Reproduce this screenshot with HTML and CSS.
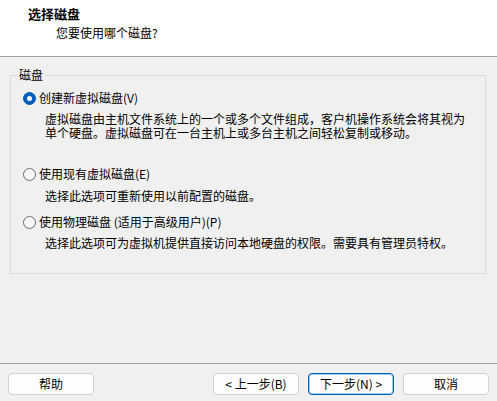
FILE: index.html
```html
<!DOCTYPE html>
<html lang="zh-CN">
<head>
<meta charset="utf-8">
<title>选择磁盘</title>
<link rel="stylesheet" href="styles.css">
</head>
<body>
<div class="dialog">
  <header class="header">
    <div class="title">选择磁盘</div>
    <div class="subtitle">您要使用哪个磁盘?</div>
  </header>
  <main class="main">
    <fieldset class="group">
      <legend class="legend">磁盘</legend>
      <div class="option first">
        <span class="radio checked"></span>
        <span class="label">创建新虚拟磁盘(V)</span>
      </div>
      <div class="desc two">虚拟磁盘由主机文件系统上的一个或多个文件组成，客户机操作系统会将其视为<br>单个硬盘。虚拟磁盘可在一台主机上或多台主机之间轻松复制或移动。</div>
      <div class="option second">
        <span class="radio"></span>
        <span class="label">使用现有虚拟磁盘(E)</span>
      </div>
      <div class="desc">选择此选项可重新使用以前配置的磁盘。</div>
      <div class="option third">
        <span class="radio"></span>
        <span class="label">使用物理磁盘 (适用于高级用户)(P)</span>
      </div>
      <div class="desc last">选择此选项可为虚拟机提供直接访问本地硬盘的权限。需要具有管理员特权。</div>
    </fieldset>
  </main>
  <footer class="footer">
    <button class="btn">帮助</button>
    <div class="spacer"></div>
    <button class="btn">&lt; 上一步(B)</button>
    <button class="btn primary">下一步(N) &gt;</button>
    <button class="btn">取消</button>
  </footer>
</div>
</body>
</html>
```

FILE: styles.css
```css
html, body {
  margin: 0;
  padding: 0;
}
body {
  width: 497px;
  height: 401px;
  overflow: hidden;
  background: #f0f0f0;
  font-family: "Noto Sans CJK SC", "Microsoft YaHei", sans-serif;
  font-size: 12px;
  color: #000;
}
.dialog {
  display: flex;
  flex-direction: column;
  height: 401px;
}
.header {
  height: 56px;
  background: #ffffff;
  border-bottom: 1px solid #a0a0a0;
  box-sizing: content-box;
  padding: 0;
}
.title {
  font-size: 13px;
  font-weight: bold;
  line-height: 14px;
  margin: 7px 0 0 28px;
}
.subtitle {
  line-height: 14px;
  margin: 5px 0 0 56px;
}
.main {
  flex: 1;
}
.group {
  margin: 11px 11px 0 10px;
  padding: 0 0 24px 6px;
  border: 1px solid #dcdcdc;
  min-width: 0;
}
.legend {
  padding: 0 2px;
  line-height: 14px;
}
.option {
  display: flex;
  align-items: center;
  height: 16px;
  line-height: 16px;
  margin-left: 6px;
}
.option.first { margin-top: 8px; }
.option.second { margin-top: 26px; }
.option.third { margin-top: 12px; }
.radio {
  width: 13px;
  height: 13px;
  box-sizing: border-box;
  border: 1px solid #6b6b6b;
  border-radius: 50%;
  background: #f7f7f7;
  margin-right: 3px;
  flex: none;
  display: flex;
  align-items: center;
  justify-content: center;
}
.radio.checked {
  background: #005fb8;
  border-color: #005fb8;
}
.radio.checked::after {
  content: "";
  width: 5px;
  height: 5px;
  border-radius: 50%;
  background: #ffffff;
}
.desc {
  margin: 8px 0 0 28px;
  line-height: 12px;
  white-space: nowrap;
}
.desc.two {
  margin-top: 6px;
  line-height: 14px;
}
.desc.last {
  margin-top: 7px;
}
.footer {
  border-top: 1px solid #a0a0a0;
  height: 38px;
  box-sizing: border-box;
  display: flex;
  align-items: flex-start;
  padding: 9px 8px 0 8px;
  gap: 9px;
}
.spacer {
  flex: 1;
}
.btn {
  width: 86px;
  height: 22px;
  box-sizing: border-box;
  background: #fdfdfd;
  border: 1px solid #d0d0d0;
  border-radius: 4px;
  font-family: inherit;
  font-size: 12px;
  color: #000;
  padding: 0;
  line-height: 18px;
}
.btn.primary {
  border-color: #005fb8;
  box-shadow: inset 0 0 0 1px rgba(0, 95, 184, 0.35);
}
```
